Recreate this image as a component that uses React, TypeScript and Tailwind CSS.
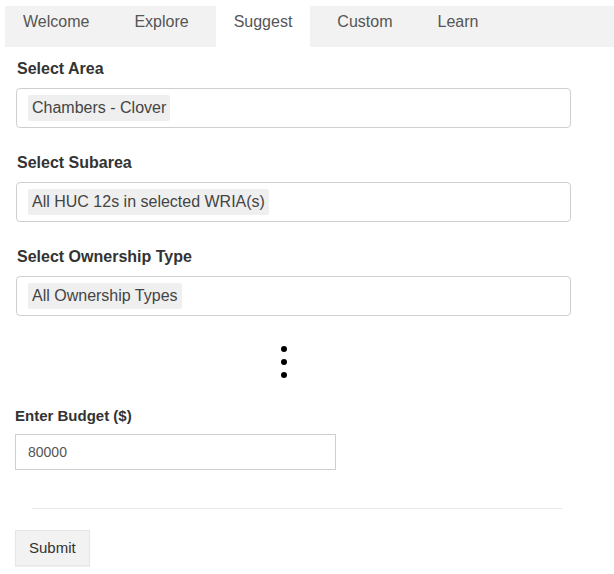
import React from "react";

const tabs = ["Welcome", "Explore", "Suggest", "Custom", "Learn"];

function SelectBox({ label, value }: { label: string; value: string }) {
  return (
    <div className="flex flex-col">
      <label className="text-[16px] leading-[18px] font-bold text-[#333] pl-[1px]">{label}</label>
      <div className="mt-[10px] w-[555px] h-[40px] border border-[#cfcfcf] rounded-[4px] bg-white flex items-center pl-[11px]">
        <span className="bg-[#efefef] rounded-[2px] px-[4px] h-[26px] flex items-center text-[16px] text-[#444]">
          {value}
        </span>
      </div>
    </div>
  );
}

export default function App() {
  return (
    <div
      className="w-[614px] h-[574px] bg-white pt-[6px] overflow-hidden"
      style={{ fontFamily: '"Liberation Sans", Arial, sans-serif' }}
    >
      {/* tabs */}
      <div className="ml-[5px] h-[41px] bg-[#f2f2f2] flex gap-[9px]">
        {tabs.map((t) => (
          <div
            key={t}
            className={
              "px-[18px] pt-[7px] h-full text-[16px] leading-[18px] text-[#555] " +
              (t === "Suggest" ? "bg-white" : "")
            }
          >
            {t}
          </div>
        ))}
      </div>

      <div className="pl-[16px] pt-[13px] flex flex-col gap-[26px]">
        <SelectBox label="Select Area" value="Chambers - Clover" />
        <SelectBox label="Select Subarea" value="All HUC 12s in selected WRIA(s)" />
        <SelectBox label="Select Ownership Type" value="All Ownership Types" />
      </div>

      {/* more */}
      <div className="ml-[281px] mt-[30px] flex flex-col gap-[7px]">
        <div className="w-[6px] h-[6px] rounded-full bg-black" />
        <div className="w-[6px] h-[6px] rounded-full bg-black" />
        <div className="w-[6px] h-[6px] rounded-full bg-black" />
      </div>

      <div className="pl-[15px] mt-[29px]">
        <label className="block text-[15px] leading-[17px] font-bold text-[#333]">Enter Budget ($)</label>
        <input
          className="mt-[10px] w-[321px] h-[36px] border border-[#cfcfcf] px-[12px] text-[14px] text-[#555] outline-none"
          defaultValue="80000"
          style={{ fontFamily: '"Liberation Sans", Arial, sans-serif' }}
        />
      </div>

      <hr className="ml-[32px] w-[530px] mt-[38px] border-0 border-t border-[#e8e8e8]" />

      <div className="pl-[15px] mt-[21px]">
        <button className="h-[36px] px-[13px] bg-[#f2f2f2] border border-[#e6e6e6] text-[15px] text-[#333] shadow-[0_1px_1px_rgba(0,0,0,0.06)]">
          Submit
        </button>
      </div>
    </div>
  );
}
